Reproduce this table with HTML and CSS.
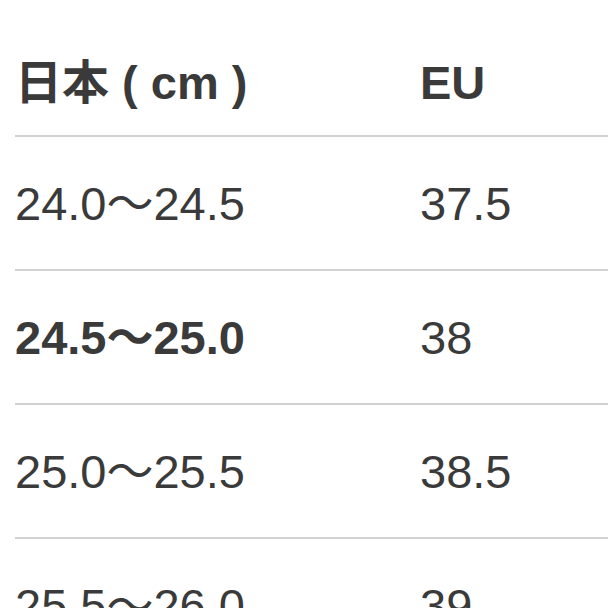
FILE: index.html
```html
<!DOCTYPE html>
<html lang="ja">
<head>
<meta charset="utf-8">
<title>サイズ表</title>
<link rel="stylesheet" href="styles.css">
</head>
<body>
<div class="table">
  <div class="row head">
    <div class="cell c1">日本 ( cm )</div>
    <div class="cell c2">EU</div>
  </div>
  <div class="row">
    <div class="cell c1">24.0～24.5</div>
    <div class="cell c2">37.5</div>
  </div>
  <div class="row">
    <div class="cell c1 strong">24.5～25.0</div>
    <div class="cell c2">38</div>
  </div>
  <div class="row">
    <div class="cell c1">25.0～25.5</div>
    <div class="cell c2">38.5</div>
  </div>
  <div class="row">
    <div class="cell c1">25.5～26.0</div>
    <div class="cell c2">39</div>
  </div>
</div>
</body>
</html>
```
FILE: styles.css
```css
html, body {
  margin: 0;
  padding: 0;
  background: #ffffff;
}
body {
  width: 608px;
  height: 608px;
  overflow: hidden;
  font-family: "Liberation Sans", "Noto Sans CJK JP", sans-serif;
  color: #3a3a3a;
}
.table {
  margin-left: 15px;
}
.row {
  display: flex;
  align-items: center;
  height: 132px;
  border-bottom: 2px solid #d2d2d2;
}
.row.head {
  height: 105px;
  padding-top: 30px;
  font-weight: bold;
}
.cell {
  font-size: 47px;
  line-height: 1;
  white-space: nowrap;
}
.c1 {
  width: 405px;
}
.strong {
  font-weight: bold;
}
```
